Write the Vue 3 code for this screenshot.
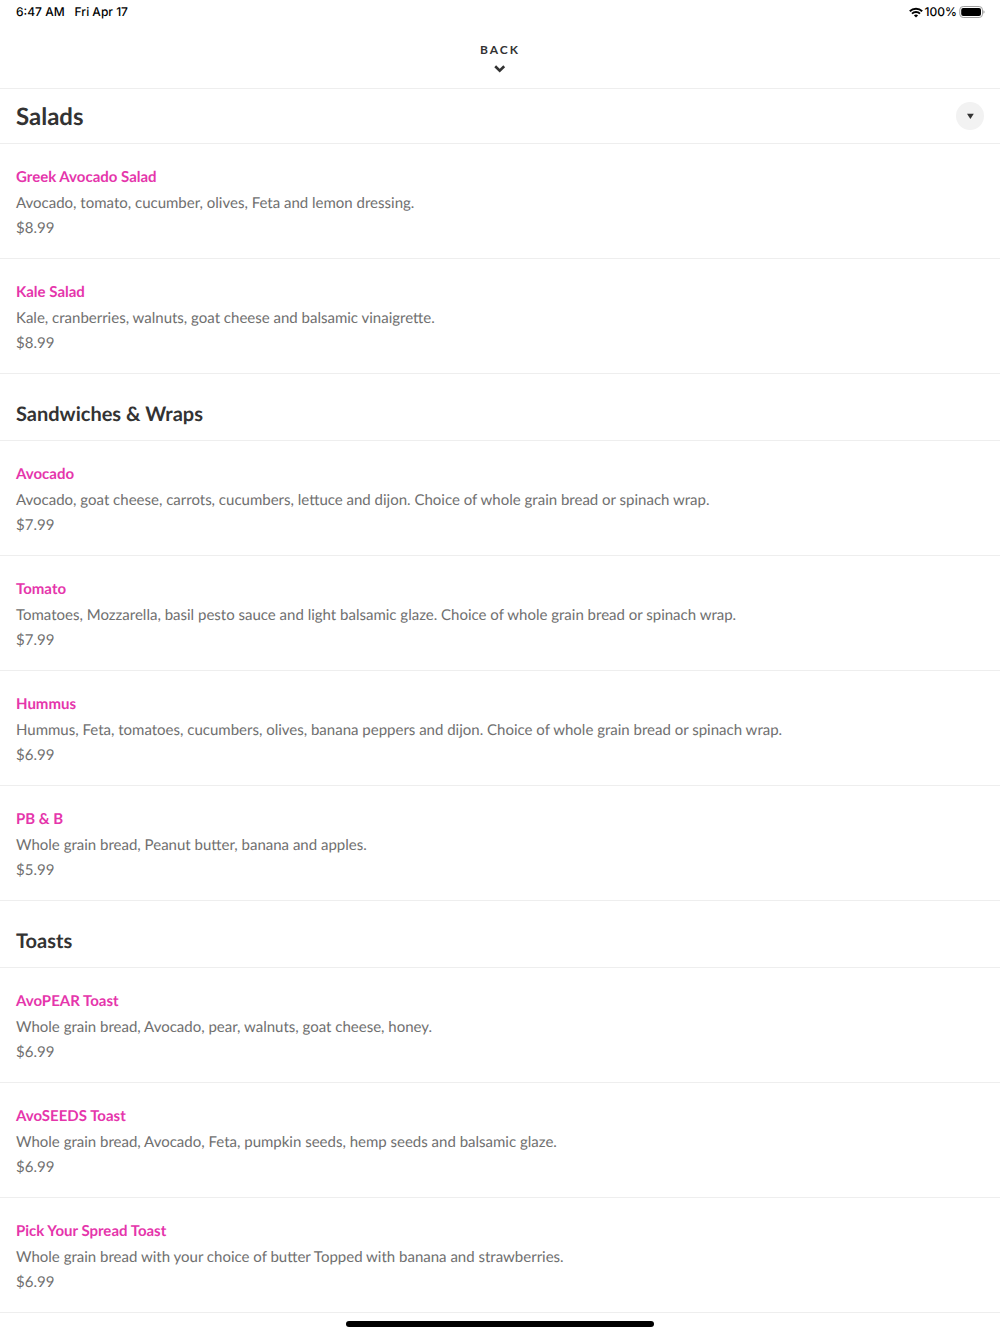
<script setup>
const sections = [
  {
    title: 'Salads',
    items: [
      ['Greek Avocado Salad', 'Avocado, tomato, cucumber, olives, Feta and lemon dressing.', '$8.99'],
      ['Kale Salad', 'Kale, cranberries, walnuts, goat cheese and balsamic vinaigrette.', '$8.99'],
    ],
  },
  {
    title: 'Sandwiches & Wraps',
    items: [
      ['Avocado', 'Avocado, goat cheese, carrots, cucumbers, lettuce and dijon. Choice of whole grain bread or spinach wrap.', '$7.99'],
      ['Tomato', 'Tomatoes, Mozzarella, basil pesto sauce and light balsamic glaze. Choice of whole grain bread or spinach wrap.', '$7.99'],
      ['Hummus', 'Hummus, Feta, tomatoes, cucumbers, olives, banana peppers and dijon. Choice of whole grain bread or spinach wrap.', '$6.99'],
      ['PB & B', 'Whole grain bread, Peanut butter, banana and apples.', '$5.99'],
    ],
  },
  {
    title: 'Toasts',
    items: [
      ['AvoPEAR Toast', 'Whole grain bread, Avocado, pear, walnuts, goat cheese, honey.', '$6.99'],
      ['AvoSEEDS Toast', 'Whole grain bread, Avocado, Feta, pumpkin seeds, hemp seeds and balsamic glaze.', '$6.99'],
      ['Pick Your Spread Toast', 'Whole grain bread with your choice of butter Topped with banana and strawberries.', '$6.99'],
    ],
  },
]
</script>

<template>
  <div class="page">
    <div class="status">
      <div class="when"><span>6:47 AM</span><span>Fri Apr 17</span></div>
      <div class="power">
        <svg class="wifi" width="14" height="11" viewBox="0 0 14 11" aria-hidden="true">
          <path d="M.8 4.2A8.9 8.9 0 0 1 13.2 4.2M3 6.6A5.7 5.7 0 0 1 11 6.6" fill="none" stroke="#000" stroke-width="1.9" />
          <path d="M7 10.6L4.9 8.6A3 3 0 0 1 9.1 8.6Z" />
        </svg>
        <span>100%</span>
        <svg class="battery" width="26" height="12" viewBox="0 0 26 12" aria-hidden="true">
          <rect x=".8" y=".5" width="22.7" height="11" rx="3.4" fill="none" stroke="#a0a0a0" />
          <rect x="2.2" y="2" width="19.8" height="8" rx="2" />
          <path d="M24.4 4.2Q25.6 4.8 25.6 6T24.4 7.8Z" fill="#a0a0a0" />
        </svg>
      </div>
    </div>
    <button class="back" type="button">
      <span>BACK</span>
      <svg width="12" height="8" viewBox="0 0 12 8" aria-hidden="true">
        <path d="M1.2 1.2L5.7 5.6L10.2 1.2" fill="none" stroke="#333" stroke-width="2.6" />
      </svg>
    </button>
    <main>
      <section v-for="(section, i) in sections" :key="section.title">
        <header v-if="i === 0" class="current">
          <h1>{{ section.title }}</h1>
          <button class="toggle" type="button" aria-label="Choose section">
            <svg width="8" height="6" viewBox="0 0 8 6" aria-hidden="true"><path d="M1 .8H7.8L4.4 6Z" fill="#333" /></svg>
          </button>
        </header>
        <h2 v-else>{{ section.title }}</h2>
        <article v-for="[name, description, price] in section.items" :key="name">
          <h3><a href="#">{{ name }}</a></h3>
          <p>{{ description }}</p>
          <p>{{ price }}</p>
        </article>
      </section>
    </main>
    <div class="home"></div>
  </div>
</template>

<style>
body { margin: 0; background: #fff; }
</style>

<style scoped>
.page { font-family: Lato, sans-serif; color: #333; text-rendering: geometricPrecision; }
.status {
  display: flex;
  justify-content: space-between;
  align-items: center;
  height: 24px;
  padding: 0 15px 0 16px;
  font: 500 12px/24px Inter, sans-serif;
  color: #000;
}
.when { display: flex; gap: 10px; }
.power { display: flex; align-items: center; gap: 2px; }
.back {
  display: flex;
  flex-direction: column;
  align-items: center;
  gap: 7px;
  width: 100%;
  height: 64px;
  padding: 18px 0 0;
  border: 0;
  background: none;
  font: 700 12px/16px Lato, sans-serif;
  letter-spacing: 2px;
  color: #333;
}
.current {
  display: flex;
  align-items: center;
  justify-content: space-between;
  height: 54px;
  padding: 0 16px;
  border-top: 1px solid #eee;
  border-bottom: 1px solid #eee;
}
h1, h2, h3, p { margin: 0; }
h1, h2, h3 { font-weight: 700; }
h1 { padding-top: 2px; font-size: 24px; line-height: 32px; }
h2 { padding: 27px 16px 13px; border-bottom: 1px solid #eee; font-size: 20px; line-height: 26px; }
.toggle {
  display: flex;
  align-items: center;
  justify-content: center;
  width: 28px;
  height: 28px;
  padding: 0;
  border: 0;
  border-radius: 50%;
  background: #f2f2f2;
}
article { padding: 21px 16px 17px; border-bottom: 1px solid #eee; }
h3, p { font-size: 15px; line-height: 25px; }
h3 { padding-bottom: 1px; }
a { color: #e535ab; text-decoration: none; }
p { color: #6f6f6f; }
.home {
  position: fixed;
  bottom: 7px;
  left: 50%;
  width: 308px;
  height: 6px;
  margin-left: -154px;
  border-radius: 3px;
  background: #000;
}
</style>
